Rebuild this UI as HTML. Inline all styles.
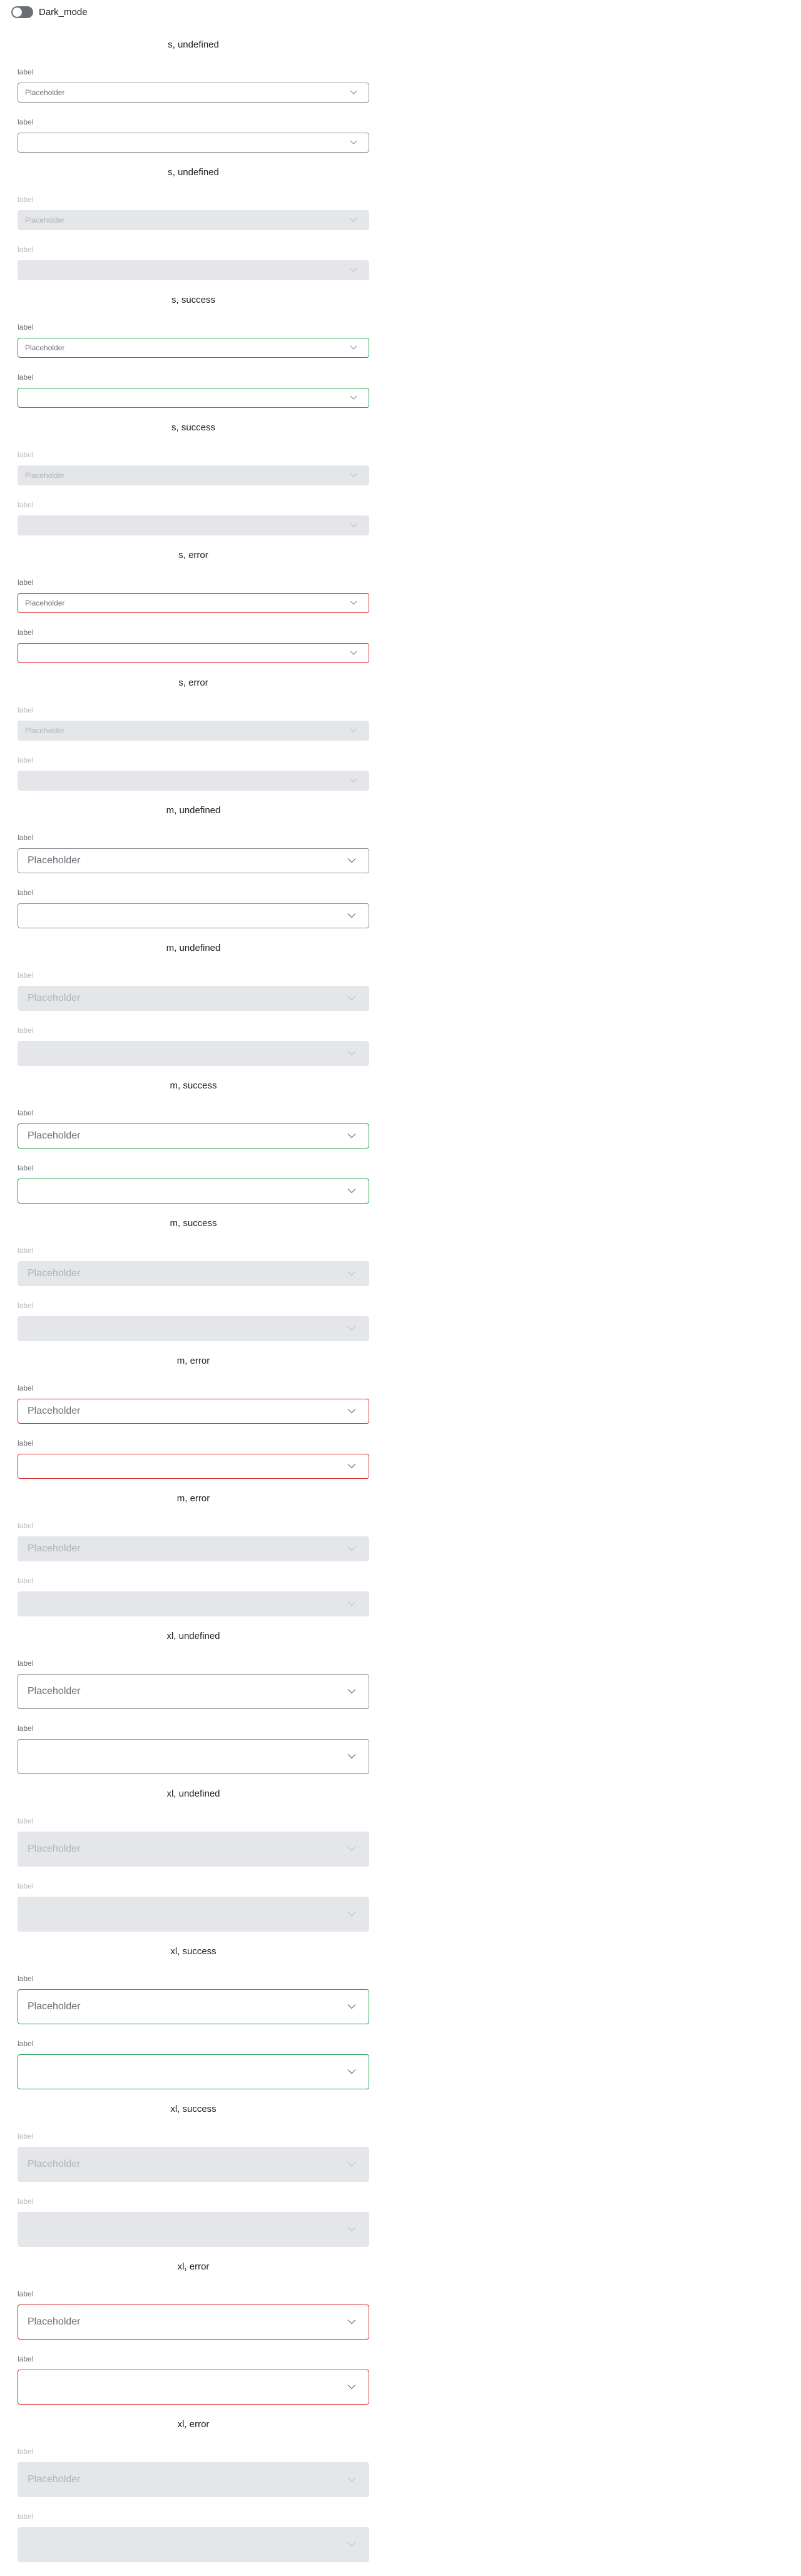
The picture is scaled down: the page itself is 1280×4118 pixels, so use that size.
<!DOCTYPE html>
<html><head><meta charset="utf-8"><style>
*{box-sizing:border-box;margin:0;padding:0}
body{width:1280px;height:4116px;background:#fff;font-family:"Liberation Sans","DejaVu Sans",sans-serif;position:relative;overflow:hidden}
.tog{position:absolute;left:18px;top:10px;width:35px;height:19px;border-radius:10px;background:#6b6e75}
.tog::after{content:"";position:absolute;left:2px;top:2px;width:15px;height:15px;border-radius:50%;background:#fff}
.dm{position:absolute;left:62px;top:10px;font-size:15px;line-height:20px;color:#222}
.wrap{position:absolute;left:28px;top:62px;width:562px}
.t{height:20px;line-height:20px;text-align:center;font-size:15px;color:#222}
.l{height:16px;line-height:16px;font-size:12px;color:#6b6e75;margin-top:25px}
.l2{margin-top:23px}
.d .l{color:#b8bbc0}
.b{position:relative;margin-top:9px;border:1px solid #8a8d93;border-radius:4px;background:#fff;color:#6b6e75}
.b svg{position:absolute;top:50%;transform:translateY(-50%)}
.s .b{height:32px;font-size:12px;line-height:30px;padding-left:11px}
.s .b svg{right:18px;width:12px;height:8px}
.m .b{height:40px;font-size:16px;line-height:38px;padding-left:15px}
.x .b{height:56px;font-size:16px;line-height:54px;padding-left:15px}
.m .b svg,.x .b svg{right:20px;width:14px;height:9px}
.ok .b{border-color:#1f9e4b}
.er .b{border-color:#d92b2b}
.d .b{background:#e5e6ea;border-color:#e5e6ea;color:#b0b3b8}
.sec{margin-bottom:22px}
</style></head><body>
<div class="tog"></div><div class="dm">Dark_mode</div>
<div class="wrap">
<div class="sec s"><div class="t">s, undefined</div><div class="l">label</div><div class="b">Placeholder<svg viewBox="0 0 12 8"><path d="M1 1l5 5 5-5" fill="none" stroke="#8a8d93" stroke-width="1.2"/></svg></div><div class="l l2">label</div><div class="b"><svg viewBox="0 0 12 8"><path d="M1 1l5 5 5-5" fill="none" stroke="#8a8d93" stroke-width="1.2"/></svg></div></div>
<div class="sec s d"><div class="t">s, undefined</div><div class="l">label</div><div class="b">Placeholder<svg viewBox="0 0 12 8"><path d="M1 1l5 5 5-5" fill="none" stroke="#c0c3c8" stroke-width="1.2"/></svg></div><div class="l l2">label</div><div class="b"><svg viewBox="0 0 12 8"><path d="M1 1l5 5 5-5" fill="none" stroke="#c0c3c8" stroke-width="1.2"/></svg></div></div>
<div class="sec s ok"><div class="t">s, success</div><div class="l">label</div><div class="b">Placeholder<svg viewBox="0 0 12 8"><path d="M1 1l5 5 5-5" fill="none" stroke="#8a8d93" stroke-width="1.2"/></svg></div><div class="l l2">label</div><div class="b"><svg viewBox="0 0 12 8"><path d="M1 1l5 5 5-5" fill="none" stroke="#8a8d93" stroke-width="1.2"/></svg></div></div>
<div class="sec s ok d"><div class="t">s, success</div><div class="l">label</div><div class="b">Placeholder<svg viewBox="0 0 12 8"><path d="M1 1l5 5 5-5" fill="none" stroke="#c0c3c8" stroke-width="1.2"/></svg></div><div class="l l2">label</div><div class="b"><svg viewBox="0 0 12 8"><path d="M1 1l5 5 5-5" fill="none" stroke="#c0c3c8" stroke-width="1.2"/></svg></div></div>
<div class="sec s er"><div class="t">s, error</div><div class="l">label</div><div class="b">Placeholder<svg viewBox="0 0 12 8"><path d="M1 1l5 5 5-5" fill="none" stroke="#8a8d93" stroke-width="1.2"/></svg></div><div class="l l2">label</div><div class="b"><svg viewBox="0 0 12 8"><path d="M1 1l5 5 5-5" fill="none" stroke="#8a8d93" stroke-width="1.2"/></svg></div></div>
<div class="sec s er d"><div class="t">s, error</div><div class="l">label</div><div class="b">Placeholder<svg viewBox="0 0 12 8"><path d="M1 1l5 5 5-5" fill="none" stroke="#c0c3c8" stroke-width="1.2"/></svg></div><div class="l l2">label</div><div class="b"><svg viewBox="0 0 12 8"><path d="M1 1l5 5 5-5" fill="none" stroke="#c0c3c8" stroke-width="1.2"/></svg></div></div>

<div class="sec m"><div class="t">m, undefined</div><div class="l">label</div><div class="b">Placeholder<svg viewBox="0 0 14 9"><path d="M1 1l6 6 6-6" fill="none" stroke="#6b6e75" stroke-width="1.2"/></svg></div><div class="l l2">label</div><div class="b"><svg viewBox="0 0 14 9"><path d="M1 1l6 6 6-6" fill="none" stroke="#6b6e75" stroke-width="1.2"/></svg></div></div>
<div class="sec m d"><div class="t">m, undefined</div><div class="l">label</div><div class="b">Placeholder<svg viewBox="0 0 14 9"><path d="M1 1l6 6 6-6" fill="none" stroke="#c0c3c8" stroke-width="1.2"/></svg></div><div class="l l2">label</div><div class="b"><svg viewBox="0 0 14 9"><path d="M1 1l6 6 6-6" fill="none" stroke="#c0c3c8" stroke-width="1.2"/></svg></div></div>
<div class="sec m ok"><div class="t">m, success</div><div class="l">label</div><div class="b">Placeholder<svg viewBox="0 0 14 9"><path d="M1 1l6 6 6-6" fill="none" stroke="#6b6e75" stroke-width="1.2"/></svg></div><div class="l l2">label</div><div class="b"><svg viewBox="0 0 14 9"><path d="M1 1l6 6 6-6" fill="none" stroke="#6b6e75" stroke-width="1.2"/></svg></div></div>
<div class="sec m ok d"><div class="t">m, success</div><div class="l">label</div><div class="b">Placeholder<svg viewBox="0 0 14 9"><path d="M1 1l6 6 6-6" fill="none" stroke="#c0c3c8" stroke-width="1.2"/></svg></div><div class="l l2">label</div><div class="b"><svg viewBox="0 0 14 9"><path d="M1 1l6 6 6-6" fill="none" stroke="#c0c3c8" stroke-width="1.2"/></svg></div></div>
<div class="sec m er"><div class="t">m, error</div><div class="l">label</div><div class="b">Placeholder<svg viewBox="0 0 14 9"><path d="M1 1l6 6 6-6" fill="none" stroke="#6b6e75" stroke-width="1.2"/></svg></div><div class="l l2">label</div><div class="b"><svg viewBox="0 0 14 9"><path d="M1 1l6 6 6-6" fill="none" stroke="#6b6e75" stroke-width="1.2"/></svg></div></div>
<div class="sec m er d"><div class="t">m, error</div><div class="l">label</div><div class="b">Placeholder<svg viewBox="0 0 14 9"><path d="M1 1l6 6 6-6" fill="none" stroke="#c0c3c8" stroke-width="1.2"/></svg></div><div class="l l2">label</div><div class="b"><svg viewBox="0 0 14 9"><path d="M1 1l6 6 6-6" fill="none" stroke="#c0c3c8" stroke-width="1.2"/></svg></div></div>

<div class="sec x"><div class="t">xl, undefined</div><div class="l">label</div><div class="b">Placeholder<svg viewBox="0 0 14 9"><path d="M1 1l6 6 6-6" fill="none" stroke="#6b6e75" stroke-width="1.2"/></svg></div><div class="l l2">label</div><div class="b"><svg viewBox="0 0 14 9"><path d="M1 1l6 6 6-6" fill="none" stroke="#6b6e75" stroke-width="1.2"/></svg></div></div>
<div class="sec x d"><div class="t">xl, undefined</div><div class="l">label</div><div class="b">Placeholder<svg viewBox="0 0 14 9"><path d="M1 1l6 6 6-6" fill="none" stroke="#c0c3c8" stroke-width="1.2"/></svg></div><div class="l l2">label</div><div class="b"><svg viewBox="0 0 14 9"><path d="M1 1l6 6 6-6" fill="none" stroke="#c0c3c8" stroke-width="1.2"/></svg></div></div>
<div class="sec x ok"><div class="t">xl, success</div><div class="l">label</div><div class="b">Placeholder<svg viewBox="0 0 14 9"><path d="M1 1l6 6 6-6" fill="none" stroke="#6b6e75" stroke-width="1.2"/></svg></div><div class="l l2">label</div><div class="b"><svg viewBox="0 0 14 9"><path d="M1 1l6 6 6-6" fill="none" stroke="#6b6e75" stroke-width="1.2"/></svg></div></div>
<div class="sec x ok d"><div class="t">xl, success</div><div class="l">label</div><div class="b">Placeholder<svg viewBox="0 0 14 9"><path d="M1 1l6 6 6-6" fill="none" stroke="#c0c3c8" stroke-width="1.2"/></svg></div><div class="l l2">label</div><div class="b"><svg viewBox="0 0 14 9"><path d="M1 1l6 6 6-6" fill="none" stroke="#c0c3c8" stroke-width="1.2"/></svg></div></div>
<div class="sec x er"><div class="t">xl, error</div><div class="l">label</div><div class="b">Placeholder<svg viewBox="0 0 14 9"><path d="M1 1l6 6 6-6" fill="none" stroke="#6b6e75" stroke-width="1.2"/></svg></div><div class="l l2">label</div><div class="b"><svg viewBox="0 0 14 9"><path d="M1 1l6 6 6-6" fill="none" stroke="#6b6e75" stroke-width="1.2"/></svg></div></div>
<div class="sec x er d"><div class="t">xl, error</div><div class="l">label</div><div class="b">Placeholder<svg viewBox="0 0 14 9"><path d="M1 1l6 6 6-6" fill="none" stroke="#c0c3c8" stroke-width="1.2"/></svg></div><div class="l l2">label</div><div class="b"><svg viewBox="0 0 14 9"><path d="M1 1l6 6 6-6" fill="none" stroke="#c0c3c8" stroke-width="1.2"/></svg></div></div>
</div>
</body></html>
